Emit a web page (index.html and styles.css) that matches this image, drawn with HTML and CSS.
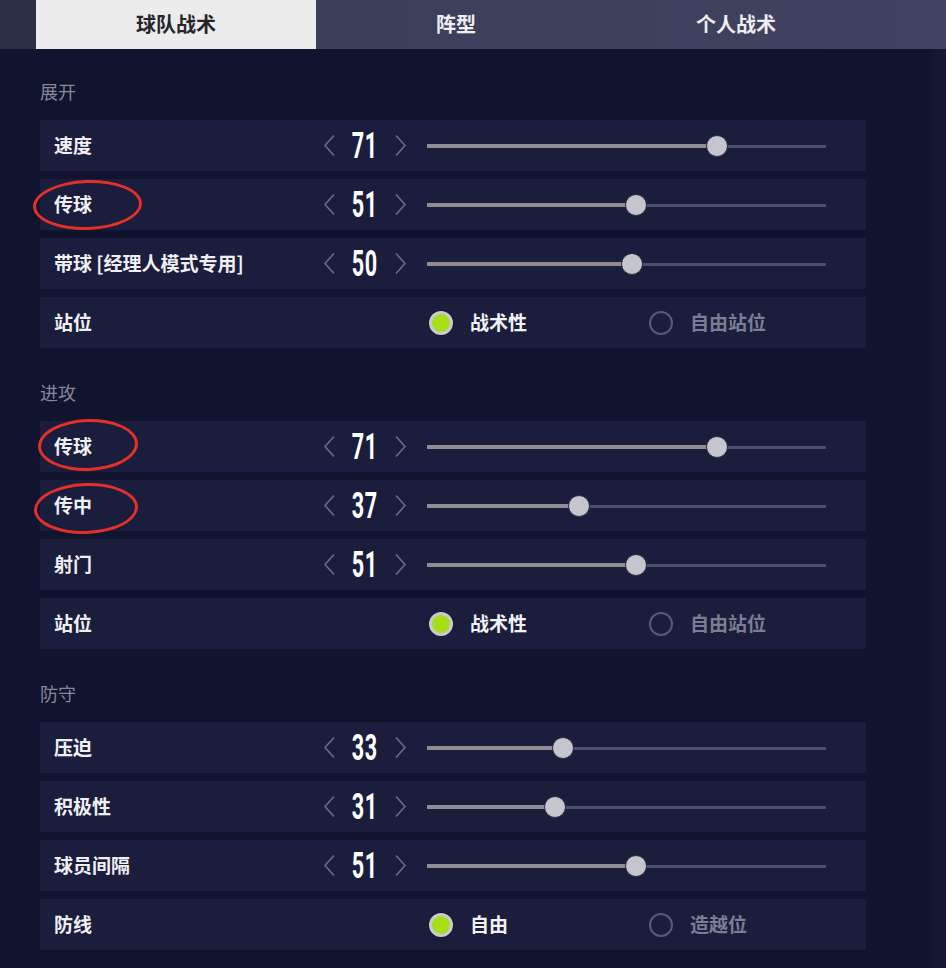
FILE: index.html
```html
<!DOCTYPE html>
<html lang="zh-CN">
<head>
<meta charset="utf-8">
<title>球队战术</title>
<link rel="stylesheet" href="styles.css">
</head>
<body>
<div class="page">
  <nav class="tabs">
    <div class="tab active">球队战术</div>
    <div class="tab">阵型</div>
    <div class="tab">个人战术</div>
  </nav>

  <main class="content">
    <section class="group">
      <h2 class="group-title">展开</h2>
      <div class="rows">
        <div class="row">
          <div class="label">速度</div>
          <div class="stepper">
            <svg class="chev" viewBox="0 0 12 22"><path d="M11 1 L2 11 L11 21"/></svg>
            <span class="num"><span class="num-in">71</span></span>
            <svg class="chev" viewBox="0 0 12 22"><path d="M1 1 L10 11 L1 21"/></svg>
          </div>
          <div class="slider"><div class="track"></div><div class="fill" style="width:72.7%"></div><div class="thumb" style="left:72.7%"></div></div>
        </div>
        <div class="row">
          <div class="label">传球</div>
          <span class="mark mark-a"></span>
          <div class="stepper">
            <svg class="chev" viewBox="0 0 12 22"><path d="M11 1 L2 11 L11 21"/></svg>
            <span class="num"><span class="num-in">51</span></span>
            <svg class="chev" viewBox="0 0 12 22"><path d="M1 1 L10 11 L1 21"/></svg>
          </div>
          <div class="slider"><div class="track"></div><div class="fill" style="width:52.4%"></div><div class="thumb" style="left:52.4%"></div></div>
        </div>
        <div class="row">
          <div class="label">带球 [经理人模式专用]</div>
          <div class="stepper">
            <svg class="chev" viewBox="0 0 12 22"><path d="M11 1 L2 11 L11 21"/></svg>
            <span class="num"><span class="num-in">50</span></span>
            <svg class="chev" viewBox="0 0 12 22"><path d="M1 1 L10 11 L1 21"/></svg>
          </div>
          <div class="slider"><div class="track"></div><div class="fill" style="width:51.4%"></div><div class="thumb" style="left:51.4%"></div></div>
        </div>
        <div class="row">
          <div class="label">站位</div>
          <div class="options">
            <div class="option on"><span class="radio"></span><span class="opt-text">战术性</span></div>
            <div class="option"><span class="radio"></span><span class="opt-text">自由站位</span></div>
          </div>
        </div>
      </div>
    </section>

    <section class="group">
      <h2 class="group-title">进攻</h2>
      <div class="rows">
        <div class="row">
          <div class="label">传球</div>
          <span class="mark mark-b"></span>
          <div class="stepper">
            <svg class="chev" viewBox="0 0 12 22"><path d="M11 1 L2 11 L11 21"/></svg>
            <span class="num"><span class="num-in">71</span></span>
            <svg class="chev" viewBox="0 0 12 22"><path d="M1 1 L10 11 L1 21"/></svg>
          </div>
          <div class="slider"><div class="track"></div><div class="fill" style="width:72.7%"></div><div class="thumb" style="left:72.7%"></div></div>
        </div>
        <div class="row">
          <div class="label">传中</div>
          <span class="mark mark-c"></span>
          <div class="stepper">
            <svg class="chev" viewBox="0 0 12 22"><path d="M11 1 L2 11 L11 21"/></svg>
            <span class="num"><span class="num-in">37</span></span>
            <svg class="chev" viewBox="0 0 12 22"><path d="M1 1 L10 11 L1 21"/></svg>
          </div>
          <div class="slider"><div class="track"></div><div class="fill" style="width:38.2%"></div><div class="thumb" style="left:38.2%"></div></div>
        </div>
        <div class="row">
          <div class="label">射门</div>
          <div class="stepper">
            <svg class="chev" viewBox="0 0 12 22"><path d="M11 1 L2 11 L11 21"/></svg>
            <span class="num"><span class="num-in">51</span></span>
            <svg class="chev" viewBox="0 0 12 22"><path d="M1 1 L10 11 L1 21"/></svg>
          </div>
          <div class="slider"><div class="track"></div><div class="fill" style="width:52.4%"></div><div class="thumb" style="left:52.4%"></div></div>
        </div>
        <div class="row">
          <div class="label">站位</div>
          <div class="options">
            <div class="option on"><span class="radio"></span><span class="opt-text">战术性</span></div>
            <div class="option"><span class="radio"></span><span class="opt-text">自由站位</span></div>
          </div>
        </div>
      </div>
    </section>

    <section class="group">
      <h2 class="group-title">防守</h2>
      <div class="rows">
        <div class="row">
          <div class="label">压迫</div>
          <div class="stepper">
            <svg class="chev" viewBox="0 0 12 22"><path d="M11 1 L2 11 L11 21"/></svg>
            <span class="num"><span class="num-in">33</span></span>
            <svg class="chev" viewBox="0 0 12 22"><path d="M1 1 L10 11 L1 21"/></svg>
          </div>
          <div class="slider"><div class="track"></div><div class="fill" style="width:34.1%"></div><div class="thumb" style="left:34.1%"></div></div>
        </div>
        <div class="row">
          <div class="label">积极性</div>
          <div class="stepper">
            <svg class="chev" viewBox="0 0 12 22"><path d="M11 1 L2 11 L11 21"/></svg>
            <span class="num"><span class="num-in">31</span></span>
            <svg class="chev" viewBox="0 0 12 22"><path d="M1 1 L10 11 L1 21"/></svg>
          </div>
          <div class="slider"><div class="track"></div><div class="fill" style="width:32.1%"></div><div class="thumb" style="left:32.1%"></div></div>
        </div>
        <div class="row">
          <div class="label">球员间隔</div>
          <div class="stepper">
            <svg class="chev" viewBox="0 0 12 22"><path d="M11 1 L2 11 L11 21"/></svg>
            <span class="num"><span class="num-in">51</span></span>
            <svg class="chev" viewBox="0 0 12 22"><path d="M1 1 L10 11 L1 21"/></svg>
          </div>
          <div class="slider"><div class="track"></div><div class="fill" style="width:52.4%"></div><div class="thumb" style="left:52.4%"></div></div>
        </div>
        <div class="row">
          <div class="label">防线</div>
          <div class="options">
            <div class="option on"><span class="radio"></span><span class="opt-text">自由</span></div>
            <div class="option"><span class="radio"></span><span class="opt-text">造越位</span></div>
          </div>
        </div>
      </div>
    </section>
  </main>
</div>
</body>
</html>
```

FILE: styles.css
```css
* { box-sizing: border-box; }

html, body {
  margin: 0;
  padding: 0;
  background: #11142f;
}

body {
  font-family: "Noto Sans CJK SC", "Noto Sans", sans-serif;
  color: #f2f2f4;
}

.page {
  width: 946px;
  min-height: 968px;
  background: linear-gradient(to right, #11142f 0, #11142f 930px, #151834 936px, #151834 946px);
}

/* Tabs */
.tabs {
  display: flex;
  height: 49px;
  padding-left: 36px;
  background: linear-gradient(to right, #2c2f47 0, #2c2f47 36px, #3a3d58 36px, #40435f 100%);
}

.tab {
  width: 280px;
  display: flex;
  align-items: center;
  justify-content: center;
  padding-bottom: 2px;
  font-size: 20px;
  font-weight: 700;
  color: #eeeef2;
}

.tab.active {
  background: #ececec;
  color: #26262a;
}

/* Content */
.content {
  padding: 32px 0 0 40px;
}

.group + .group {
  margin-top: 34px;
}

.group-title {
  margin: 0 0 19px 0;
  height: 20px;
  line-height: 20px;
  font-size: 18px;
  font-weight: 400;
  color: #868898;
}

.rows {
  display: flex;
  flex-direction: column;
  gap: 8px;
}

.row {
  position: relative;
  width: 826px;
  height: 51px;
  display: flex;
  align-items: center;
  padding-left: 14px;
  background: #1a1d3c;
}

.label {
  width: 264px;
  flex: none;
  font-size: 19px;
  line-height: 24px;
  margin-bottom: 1px;
  font-weight: 700;
  color: #f0f0f4;
  white-space: nowrap;
}

/* Stepper */
.stepper {
  width: 94px;
  flex: none;
  display: flex;
  align-items: center;
  padding-left: 5px;
}

.chev {
  width: 12px;
  height: 23px;
  flex: none;
}

.chev path {
  fill: none;
  stroke: #696c86;
  stroke-width: 1.6;
}

.num {
  width: 60px;
  display: flex;
  justify-content: center;
}

.num-in {
  display: inline-block;
  font-family: "Roboto", "Liberation Sans", sans-serif;
  font-weight: 700;
  font-size: 36px;
  line-height: 40px;
  color: #ffffff;
  transform: scaleX(0.6);
  letter-spacing: 1px;
}

/* Slider */
.slider {
  position: relative;
  width: 399px;
  height: 24px;
  margin-left: 15px;
  flex: none;
}

.track {
  position: absolute;
  left: 0;
  right: 0;
  top: 11px;
  height: 3px;
  background: #4a4e70;
}

.fill {
  position: absolute;
  left: 0;
  top: 10px;
  height: 4px;
  background: #8e8d95;
}

.thumb {
  position: absolute;
  top: 1px;
  width: 22px;
  height: 22px;
  margin-left: -11px;
  border-radius: 50%;
  background: #c5c5cd;
  border: 1px solid #2a2c3c;
}

/* Radio options */
.options {
  display: flex;
  margin-left: 111px;
}

.option {
  width: 220px;
  display: flex;
  align-items: center;
}

.radio {
  width: 24px;
  height: 24px;
  border-radius: 50%;
  border: 2px solid #575a73;
  flex: none;
}

.option.on .radio {
  background: #a4df18;
  border: 3px solid #c9c9cf;
  box-shadow: 0 0 0 1px #1a1c2c;
}

.opt-text {
  margin-left: 17px;
  font-size: 19px;
  line-height: 24px;
  margin-bottom: 1px;
  font-weight: 700;
  color: #7b7e92;
}

.option.on .opt-text {
  color: #f2f2f6;
}

/* Red annotation ellipses */
.mark {
  position: absolute;
  border: 3px solid #e3312a;
  border-radius: 50%;
  pointer-events: none;
}

.mark-a {
  left: -7px;
  top: 1px;
  width: 109px;
  height: 50px;
  transform: rotate(-2deg);
}

.mark-b {
  left: -2px;
  top: -2px;
  width: 100px;
  height: 52px;
  transform: rotate(-2deg);
}

.mark-c {
  left: -6px;
  top: 3px;
  width: 104px;
  height: 51px;
  transform: rotate(-2deg);
}
```
